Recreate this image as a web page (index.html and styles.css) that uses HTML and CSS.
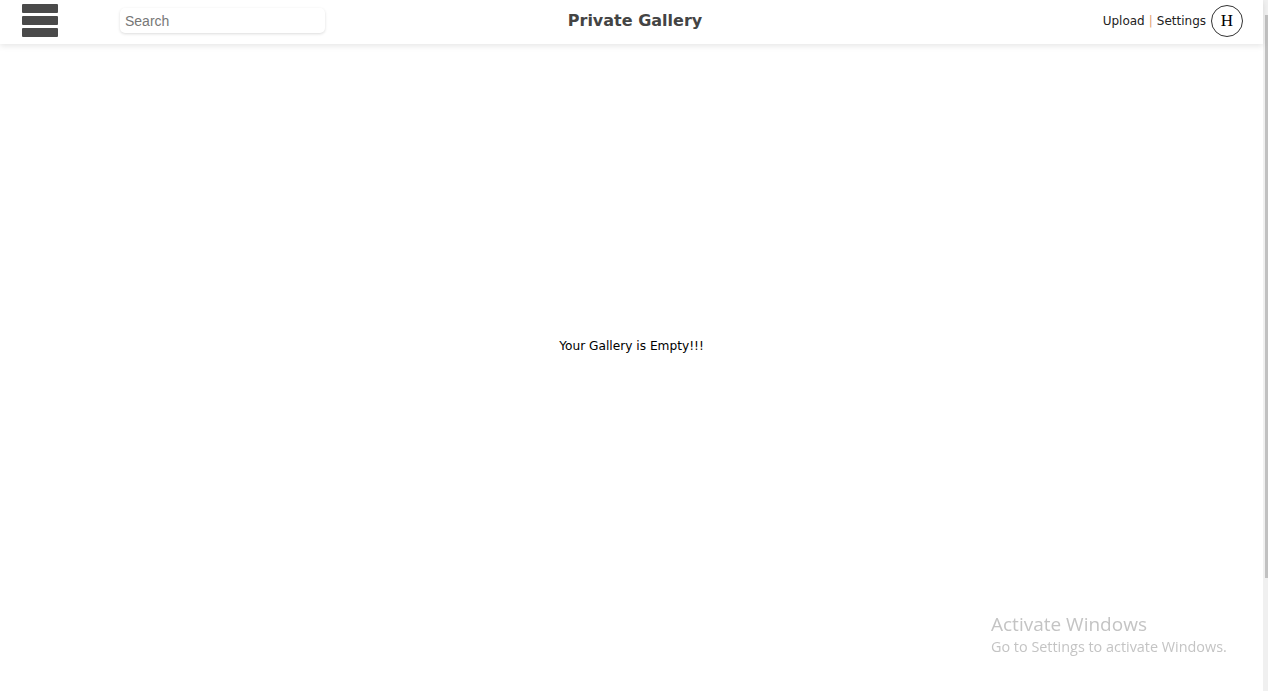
FILE: index.html
```html
<!DOCTYPE html>
<html lang="en">
<head>
<meta charset="utf-8">
<title>Private Gallery</title>
<link rel="stylesheet" href="styles.css">
</head>
<body>
<div class="app">
  <header class="navbar">
    <div class="nav-left">
      <button class="menu-btn" aria-label="Menu">
        <span class="bar"></span><span class="bar"></span><span class="bar"></span>
      </button>
      <input class="search" type="text" placeholder="Search">
    </div>
    <h1 class="title">Private Gallery</h1>
    <div class="nav-right">
      <a class="link" href="#">Upload</a><span class="sep">|</span><a class="link" href="#">Settings</a>
      <div class="avatar">H</div>
    </div>
  </header>
  <main class="content">
    <p class="empty">Your Gallery is Empty!!!</p>
  </main>
</div>
<div class="scrollbar"><div class="thumb"></div></div>
<div class="watermark">
  <div class="wm-title">Activate Windows</div>
  <div class="wm-sub">Go to Settings to activate Windows.</div>
</div>
</body>
</html>
```
FILE: styles.css
```css
* { box-sizing: border-box; }
html, body { margin: 0; padding: 0; height: 100%; }
body {
  display: flex;
  background: #fff;
  overflow: hidden;
  font-family: "DejaVu Sans", Verdana, sans-serif;
}
.app {
  flex: 1;
  display: flex;
  flex-direction: column;
  height: 691px;
}
.navbar {
  height: 44px;
  display: flex;
  align-items: center;
  justify-content: space-between;
  background: #fff;
  box-shadow: 0 2px 6px rgba(0,0,0,0.10);
  position: relative;
  z-index: 1;
}
.nav-left {
  display: flex;
  align-items: center;
  width: 330px;
}
.menu-btn {
  border: 0;
  background: transparent;
  padding: 0;
  margin: 0 0 3px 22px;
  display: flex;
  flex-direction: column;
  gap: 3px;
  cursor: pointer;
}
.bar {
  display: block;
  width: 36px;
  height: 9px;
  background: #4a4a4a;
  border-radius: 1px;
}
.search {
  margin-left: 62px;
  width: 205px;
  height: 25px;
  border: 0;
  border-radius: 5px;
  box-shadow: 0 1px 3px rgba(0,0,0,0.14);
  padding: 0 5px;
  font-family: "Liberation Sans", Arial, sans-serif;
  font-size: 14px;
  color: #333;
  outline: none;
  margin-top: -3px;
}
.search::placeholder { color: #777; }
.title {
  margin: 0 0 3px 7px;
  font-size: 16px;
  font-weight: bold;
  color: #444;
}
.nav-right {
  width: 330px;
  display: flex;
  align-items: center;
  justify-content: flex-end;
  padding-right: 20px;
  font-family: "DejaVu Sans", Tahoma, sans-serif;
  font-size: 12px;
  margin-bottom: 3px;
}
.link {
  color: #222;
  text-decoration: none;
}
.sep {
  color: #e0a070;
  margin: 0 4px;
}
.avatar {
  width: 32px;
  height: 32px;
  margin-left: 5px;
  border: 1px solid #333;
  border-radius: 50%;
  display: flex;
  align-items: center;
  justify-content: center;
  font-family: "Liberation Serif", "Times New Roman", serif;
  font-size: 17px;
  color: #000;
}
.content {
  flex: 1;
  display: flex;
  align-items: center;
  justify-content: center;
  margin-top: -44px;
}
.empty {
  margin: 0;
  font-family: "DejaVu Sans", Tahoma, sans-serif;
  font-size: 12.2px;
  color: #000;
}
.scrollbar {
  width: 5px;
  height: 691px;
  background: #f0f0f0;
  padding: 15px 0 113px 2px;
}
.thumb {
  width: 3px;
  height: 100%;
  background: #c1c1c1;
}
.watermark {
  position: fixed;
  left: 991px;
  top: 611px;
  color: #c4c4c4;
  font-family: "Open Sans", "Noto Sans", sans-serif;
}
.wm-title { font-size: 19px; line-height: 26px; }
.wm-sub { font-size: 14.4px; line-height: 20px; }
```
